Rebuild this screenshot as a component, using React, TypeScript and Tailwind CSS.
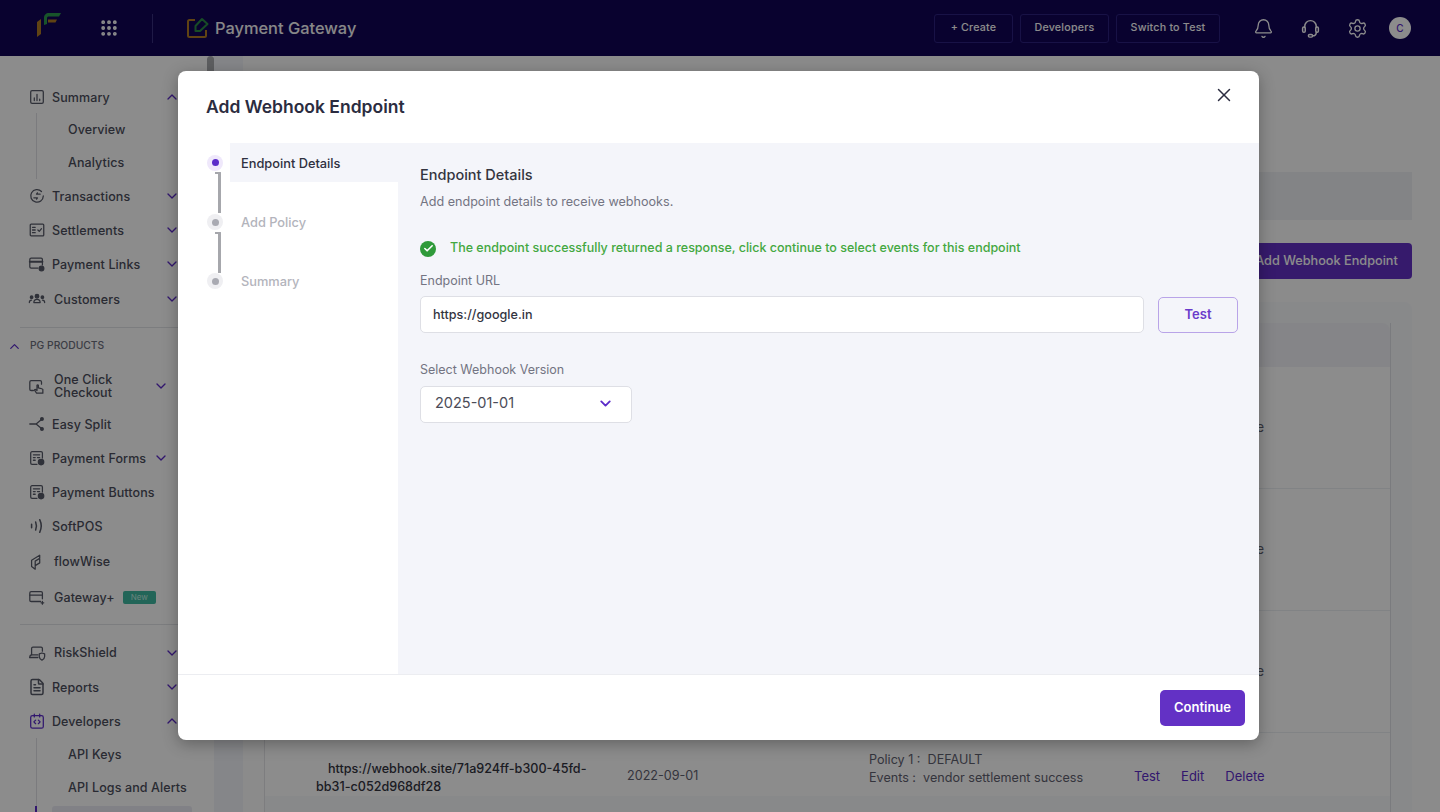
import React from "react";
import {
  Bell,
  Check,
  ChevronDown,
  ChevronUp,
  FileText,
  Grip,
  Settings,
  X,
} from "lucide-react";

type IconProps = { className?: string };

const Svg = ({ className = "", children }: IconProps & { children: React.ReactNode }) => (
  <svg
    viewBox="0 0 20 20"
    fill="none"
    stroke="currentColor"
    strokeWidth="1.4"
    strokeLinecap="round"
    strokeLinejoin="round"
    className={className}
  >
    {children}
  </svg>
);

const SummaryIcon = (p: IconProps) => (
  <Svg {...p}>
    <rect x="3" y="3" width="14" height="14" rx="1.5" />
    <path d="M7 14v-3M10 14V7M13 14v-1.5" />
  </Svg>
);
const TransactionsIcon = (p: IconProps) => (
  <Svg {...p}>
    <path d="M17 10a7 7 0 1 1-2-5" />
    <path d="M6.5 12h4l-1 1.5M13.5 8h-4l1-1.5" />
  </Svg>
);
const SettlementsIcon = (p: IconProps) => (
  <Svg {...p}>
    <rect x="2.5" y="3.5" width="15" height="13" rx="1" />
    <path d="M5 7h3M5 10h3M5 13h3M11 10l1.5 1.5L15 8.5" />
  </Svg>
);
const LinksIcon = (p: IconProps) => (
  <Svg {...p}>
    <path d="M16 11V5a1.500 1.500 0 0 0-1.500-1.500h-11A1.500 1.500 0 0 0 2 5v8a1.500 1.500 0 0 0 1.500 1.500H11" />
    <path d="M2 7.500h14" strokeWidth="2.2" />
    <circle cx="15" cy="15" r="2.600" fill="currentColor" />
  </Svg>
);
const CustomersIcon = (p: IconProps) => (
  <Svg {...p}>
    <circle cx="10" cy="7" r="2" fill="currentColor" />
    <circle cx="4" cy="8" r="1.400" fill="currentColor" />
    <circle cx="16" cy="8" r="1.400" fill="currentColor" />
    <path d="M6.500 14c0-2.500 1.500-3.500 3.500-3.500s3.500 1 3.500 3.500zM1.500 14c0-2 1-2.800 2.500-2.800M18.500 14c0-2-1-2.800-2.500-2.800" />
  </Svg>
);
const CheckoutIcon = (p: IconProps) => (
  <Svg {...p}>
    <path d="M6 15H3.500A1.500 1.500 0 0 1 2 13.500v-8A1.500 1.500 0 0 1 3.500 4h10A1.500 1.500 0 0 1 15 5.500V8" />
    <path d="M10 9v6l-1.500-1c-1-.500-1.500.500-1 1l2 3h7v-4c0-1-3-1.500-5-2V9a1 1 0 0 0-1.500 0z" />
  </Svg>
);
const SplitIcon = (p: IconProps) => (
  <Svg {...p}>
    <path d="M2 10h7l6-5M9 10l6 5" />
    <circle cx="15.500" cy="4.500" r="1.500" fill="currentColor" />
    <circle cx="15.500" cy="15.500" r="1.500" fill="currentColor" />
  </Svg>
);
const FormIcon = (p: IconProps) => (
  <Svg {...p}>
    <path d="M10 17H4.500A1.500 1.500 0 0 1 3 15.500v-11A1.500 1.500 0 0 1 4.500 3h10A1.500 1.500 0 0 1 16 4.500V10" />
    <path d="M6 6.500h7M6 9.500h2M6 12.500h2M10.500 9.500h2.500" />
    <circle cx="14.500" cy="14.500" r="3" fill="currentColor" />
  </Svg>
);
const PosIcon = (p: IconProps) => (
  <Svg {...p}>
    <path d="M4 8v4M8.500 5.500c1.200 3 1.200 6 0 9M13 3c2.200 4.500 2.200 9.500 0 14" strokeWidth="1.700" />
  </Svg>
);
const FlowIcon = (p: IconProps) => (
  <Svg {...p}>
    <path d="M4 8l9-5.500V11l-5 3V18l-4-3zM8 14V9l5-3" />
  </Svg>
);
const GatewayIcon = (p: IconProps) => (
  <Svg {...p}>
    <path d="M14 15H3.500A1.500 1.500 0 0 1 2 13.500v-8A1.500 1.500 0 0 1 3.500 4h11A1.500 1.500 0 0 1 16 5.500V12" />
    <path d="M2 8h14M16 15v3M14.500 16.500h3" />
  </Svg>
);
const RiskIcon = (p: IconProps) => (
  <Svg {...p}>
    <path d="M4 12V5a1.500 1.500 0 0 1 1.500-1.500h9A1.500 1.500 0 0 1 16 5v3M2 15h9" />
    <path d="M2 15c0-1.500 1-3 2-3h7" />
    <path d="M12.500 11l3-1 3 1v3c0 2-1.500 3.200-3 4-1.500-.8-3-2-3-4z" />
  </Svg>
);
const DevIcon = (p: IconProps) => (
  <Svg {...p}>
    <rect x="3" y="4" width="14" height="14" rx="2" />
    <path d="M7 2.500v3M13 2.500v3M8.500 9l-2 2 2 2M11.500 9l2 2-2 2" />
  </Svg>
);

// headset with the mic hanging under the right ear cup
const SupportIcon = (p: IconProps) => (
  <Svg {...p}>
    <path d="M4.500 9V8a5.500 5.500 0 0 1 11 0v1" />
    <rect x="2.500" y="8.500" width="2.500" height="5" rx="1.200" />
    <rect x="15" y="8.500" width="2.500" height="5" rx="1.200" />
    <path d="M15.500 13.500c0 2-1.500 3.500-3.500 3.500" />
    <rect x="8" y="15.800" width="4" height="2.400" rx="1.200" />
  </Svg>
);

const ProductLogo = () => (
  <svg viewBox="0 0 22 22" className="h-[22px] w-[22px]" fill="none" strokeWidth="2" strokeLinejoin="round">
    <path d="M8 3H2.500Q1 3 1 4.500v14Q1 20 2.500 20h15q1.500 0 1.500-1.500V13" stroke="#b07a24" />
    <path d="M8.500 9L15 2l5.500 5L13 14H8.500z" stroke="#2a8a45" />
  </svg>
);

const BrandLogo = () => (
  <svg viewBox="0 0 24 24" className="h-6 w-6">
    <path d="M0 9l4-3v15l-4 3z" fill="#b07a24" />
    <path d="M7 12V5c0-3 2-5 5-5h12l-2 3.500H12c-1.500 0-2 .5-2 2V11z" fill="#2d9a4e" />
    <path d="M11 6.500h9L18.500 9.500H11z" fill="#b07a24" />
  </svg>
);

const chevronClass = "h-[16px] w-[16px] text-[#5b2bc9]";

function NavRow({
  icon: Icon,
  label,
  height = "h-[34px]",
  open,
  closed,
  badge,
  gap = "ml-[6px]",
  iconClass = "text-[#575a68]",
}: {
  icon: (p: IconProps) => React.ReactNode;
  label: React.ReactNode;
  height?: string;
  open?: boolean;
  closed?: boolean;
  badge?: boolean;
  gap?: string;
  iconClass?: string;
}) {
  return (
    <div className={`flex items-center pl-[28px] ${height}`}>
      <Icon className={`h-[18px] w-[18px] shrink-0 ${iconClass}`} />
      <span className={`${gap} text-[12.500px] leading-[13px] font-medium tracking-[0.1px] text-[#4c4e5c]`}>
        {label}
      </span>
      {badge && (
        <span className="ml-2 rounded-[2px] bg-[#3fb8a0] px-2 py-[1px] text-[8px] leading-[11px] text-[#bfeee2]">
          New
        </span>
      )}
      <span className="ml-auto">
        {open && <ChevronUp className={chevronClass} />}
        {closed && <ChevronDown className={chevronClass} />}
      </span>
    </div>
  );
}

function SubRow({ label }: { label: string }) {
  return (
    <div className="flex h-[33px] items-center pt-[1px] pl-[68px] text-[12.500px] font-medium tracking-[0.1px] whitespace-nowrap text-[#4c4e5c]">
      {label}
    </div>
  );
}

function Sidebar() {
  return (
    <aside className="relative h-[756px] w-[207px] shrink-0 overflow-hidden bg-white pt-[24px]">
      <div className="flex w-[180px] flex-col">
        <NavRow icon={SummaryIcon} label="Summary" open />
        <div className="relative -mt-[1px]">
          <span className="absolute top-0 bottom-0 left-[36px] w-px bg-[#e0e1e6]" />
          <SubRow label="Overview" />
          <SubRow label="Analytics" />
        </div>
        <NavRow icon={TransactionsIcon} label="Transactions" closed />
        <NavRow icon={SettlementsIcon} label="Settlements" closed />
        <NavRow icon={LinksIcon} label="Payment Links" closed />
        <NavRow icon={CustomersIcon} gap="ml-[8px]" height="h-[36px]" label="Customers" closed />
        <div className="mt-[10px] ml-[20px] h-px bg-[#e2e3e8]" />
        <div className="flex h-[36px] items-center pl-[7px] text-[10.300px] font-medium text-[#6d6f7d]">
          <ChevronUp className="h-[15px] w-[15px] text-[#5b2bc9]" />
          <span className="ml-[8px]">PG PRODUCTS</span>
        </div>
        <div className="w-[169px]">
          <NavRow
            icon={CheckoutIcon}
            height="h-[43px]"
            gap="ml-[8px]"
            label={
              <>
                One Click
                <br />
                Checkout
              </>
            }
            closed
          />
          <NavRow icon={SplitIcon} label="Easy Split" />
          <NavRow icon={FormIcon} label="Payment Forms" closed />
          <NavRow icon={FormIcon} label="Payment Buttons" />
          <NavRow icon={PosIcon} label="SoftPOS" />
          <NavRow icon={FlowIcon} gap="ml-[8px]" label="flowWise" height="h-[37px]" />
          <NavRow icon={GatewayIcon} gap="ml-[8px]" label="Gateway+" badge />
        </div>
        <div className="mt-[10px] ml-[20px] h-px bg-[#e2e3e8]" />
        <div className="h-[10px]" />
        <NavRow icon={RiskIcon} gap="ml-[8px]" height="h-[35px]" label="RiskShield" closed />
        <NavRow icon={FileText} label="Reports" closed />
        <NavRow icon={DevIcon} iconClass="text-[#5b2bc9]" label="Developers" open />
        <div className="relative">
          <span className="absolute top-0 bottom-0 left-[36px] w-px bg-[#e0e1e6]" />
          <SubRow label="API Keys" />
          <SubRow label="API Logs and Alerts" />
          <div className="relative mt-[2px] ml-[52px] h-[34px] w-[140px] rounded-[3px] bg-[#ececf4]">
            <span className="absolute top-0 -left-[17px] h-full w-[2px] bg-[#5b2bc9]" />
          </div>
        </div>
      </div>
    </aside>
  );
}

function TopNav() {
  const buttons = [
    { label: "+ Create", width: "w-[79px]" },
    { label: "Developers", width: "w-[89px]" },
    { label: "Switch to Test", width: "w-[104px]" },
  ];
  return (
    <header className="flex h-[56px] items-center bg-[#120557] pr-[29px]">
      <div className="ml-[37px] -mt-[6px]">
        <BrandLogo />
      </div>
      <Grip className="ml-[38px] h-[20px] w-[20px] text-white" strokeWidth={2.6} />
      <span className="ml-[33px] h-[29px] w-px bg-[#3a3080]" />
      <div className="ml-[34px]">
        <ProductLogo />
      </div>
      <span className="ml-[6px] text-[16.400px] font-medium text-[#f6f6f8]">Payment Gateway</span>
      <div className="ml-auto flex items-center gap-[7px]">
        {buttons.map((b) => (
          <button
            key={b.label}
            className={`h-[29px] rounded-[3px] border border-[#2c2180] text-[10.700px] font-medium tracking-[0.2px] text-white ${b.width}`}
          >
            {b.label}
          </button>
        ))}
      </div>
      <Bell className="ml-[33px] h-[21px] w-[21px] text-white" strokeWidth={1.5} />
      <SupportIcon className="ml-[26px] h-[21px] w-[21px] text-white" />
      <Settings className="ml-[26px] h-[21px] w-[21px] text-white" strokeWidth={1.5} />
      <span className="ml-[21px] flex h-[22px] w-[22px] items-center justify-center rounded-full bg-white text-[10px] font-medium text-[#5b2bc9]">
        C
      </span>
    </header>
  );
}

const rows = [0, 1, 2];

function Background() {
  return (
    <main className="flex min-w-0 flex-1 bg-[#fdfdfe]">
      <div className="h-full w-[29px] bg-[#f3f5fa]" />
      <div className="flex min-w-0 flex-1 flex-col pr-[28px] pl-[21px]">
        <div className="mt-[116px] h-[48px] bg-[#eef0f4]" />
        <div className="mt-[23px] flex justify-end">
          <button className="h-[36px] w-[171px] rounded-[4px] bg-[#6331c5] text-[12.700px] font-medium text-white">
            Add Webhook Endpoint
          </button>
        </div>
        <div className="mt-[23px] flex-1 rounded-t-[8px] border-l border-[#e3e4e8] bg-[#f8f9fb] pt-[21px] pr-[21px]">
          <div className="h-full border-r border-[#dfe0e5]">
            <div className="h-[44px] rounded-t-[8px] bg-[#f2f3f7]" />
            <div className="bg-white">
              {rows.map((r) => (
                <div
                  key={r}
                  className="flex h-[122px] items-center justify-end border-b border-[#eceef2] pt-[1px] pr-[126px] text-[13px] text-[#5f6170]"
                >
                  Delete
                </div>
              ))}
              <div className="flex items-start pt-[18px] text-[12.600px] text-[#5f6170]">
                <span className="mt-[9px] ml-[51px] w-[290px] indent-[12px] leading-[18px] font-medium text-[#33343f]">
                  https://webhook.site/71a924ff-b300-45fd-bb31-c052d968df28
                </span>
                <span className="mt-[16px] ml-[21px] w-[242px]">2022-09-01</span>
                <span className="w-[265px] leading-[18px]">
                  Policy 1 :&nbsp; DEFAULT
                  <br />
                  Events :&nbsp; vendor settlement success
                </span>
                <span className="mt-[16px] flex gap-[21px] text-[13px] text-[#5b2bc9]">
                  <span>Test</span>
                  <span>Edit</span>
                  <span>Delete</span>
                </span>
              </div>
            </div>
          </div>
        </div>
      </div>
    </main>
  );
}

function Connector() {
  return <div className="ml-[37px] h-[41px] w-[6px] rounded-tr-[1px] border-t-2 border-r-[3px] border-[#a6a7ac]" />;
}

function StepDot({ active }: { active?: boolean }) {
  return (
    <span
      className={`flex h-[16px] w-[16px] items-center justify-center rounded-full ${
        active ? "bg-[#efe8fb]" : "bg-[#efeff2]"
      }`}
    >
      <span className={`h-[7px] w-[7px] rounded-full ${active ? "bg-[#5b2bc9]" : "bg-[#a9aab2]"}`} />
    </span>
  );
}

function Stepper() {
  return (
    <div className="w-[220px] shrink-0">
      <div className="flex h-[39px] items-center">
        <span className="ml-[29px]">
          <StepDot active />
        </span>
        <div className="ml-[7px] flex h-full flex-1 items-center bg-[#f4f5fa] pt-[2px] pl-[11px] text-[12.800px] font-medium text-[#2f3040]">
          Endpoint Details
        </div>
      </div>
      <div className="-mt-[10px]">
        <Connector />
      </div>
      <div className="mt-[1px] flex h-[16px] items-center">
        <span className="ml-[29px]">
          <StepDot />
        </span>
        <span className="mt-[1px] ml-[18px] text-[12.800px] font-medium text-[#b3b4bc]">Add Policy</span>
      </div>
      <div className="mt-[2px]">
        <Connector />
      </div>
      <div className="flex h-[16px] items-center">
        <span className="ml-[29px]">
          <StepDot />
        </span>
        <span className="mt-[1px] ml-[18px] text-[12.800px] font-medium text-[#b3b4bc]">Summary</span>
      </div>
    </div>
  );
}

function Modal() {
  return (
    <div className="absolute inset-0 bg-black/45 pt-[71px] pl-[178px]">
      <div className="flex h-[669px] w-[1081px] flex-col overflow-hidden rounded-[8px] bg-white shadow-[0_4px_16px_rgba(0,0,0,0.3)]">
        <div className="flex h-[72px] shrink-0 items-start justify-between">
          <h2 className="mt-[24px] ml-[28px] text-[17.500px] leading-[23px] font-semibold text-[#2b2c40]">
            Add Webhook Endpoint
          </h2>
          <X className="mt-[13px] mr-[24px] h-[22px] w-[22px] text-[#2b2c40]" strokeWidth={1.6} />
        </div>
        <div className="flex min-h-0 flex-1">
          <Stepper />
          <div className="flex-1 bg-[#f4f5fa] pt-[23px] pr-[21px] pl-[22px]">
            <h3 className="text-[14.500px] leading-[18px] font-medium text-[#33343f]">Endpoint Details</h3>
            <p className="mt-[9px] text-[12.600px] leading-[18px] text-[#737482]">
              Add endpoint details to receive webhooks.
            </p>
            <div className="mt-[27px] flex h-[20px] items-center text-[12.500px] font-medium text-[#43a83f]">
              <span className="mt-[1px] flex h-4 w-4 items-center justify-center rounded-full bg-[#2f9a3a]">
                <Check className="h-[11px] w-[11px] text-white" strokeWidth={3.5} />
              </span>
              <span className="ml-[14px]">
                The endpoint successfully returned a response, click continue to select events for this endpoint
              </span>
            </div>
            <label className="mt-[15px] block text-[12.500px] leading-[16px] text-[#737482]">Endpoint URL</label>
            <div className="mt-[7px] flex items-center">
              <div className="flex h-[37px] w-[724px] items-center rounded-[5px] border border-[#dedfe5] bg-white pt-[1px] pl-[12px] text-[12.600px] font-medium text-[#33343f]">
                https://google.in
              </div>
              <button className="ml-[14px] h-[36px] w-[80px] rounded-[5px] border border-[#b9a4e8] text-[13px] font-semibold text-[#6a3bcb]">
                Test
              </button>
            </div>
            <label className="mt-[29px] block text-[12.500px] leading-[16px] text-[#737482]">
              Select Webhook Version
            </label>
            <div className="mt-[8px] flex h-[37px] w-[212px] items-center justify-between rounded-[5px] border border-[#dedfe5] bg-white pr-[17px] pl-[14px] text-[14.500px] text-[#4b4c58]">
              <span className="-mt-[3px]">2025-01-01</span>
              <ChevronDown className="-mt-[3px] h-[17px] w-[17px] text-[#5b2bc9]" strokeWidth={2.6} />
            </div>
          </div>
        </div>
        <div className="flex h-[66px] shrink-0 items-center justify-end border-t border-[#ecedf1] pr-[14px]">
          <button className="h-[36px] w-[85px] rounded-[5px] bg-[#6331c5] text-[13px] font-semibold text-white">
            Continue
          </button>
        </div>
      </div>
    </div>
  );
}

export default function App() {
  return (
    <div className="relative h-[812px] w-[1440px] overflow-hidden bg-white font-['Inter','Noto_Sans',sans-serif]">
      <TopNav />
      <div className="flex h-[756px]">
        <Sidebar />
        <div className="h-[300px] w-[7px] rounded-[4px] bg-[#a9abb0]" />
        <Background />
      </div>
      <Modal />
    </div>
  );
}
